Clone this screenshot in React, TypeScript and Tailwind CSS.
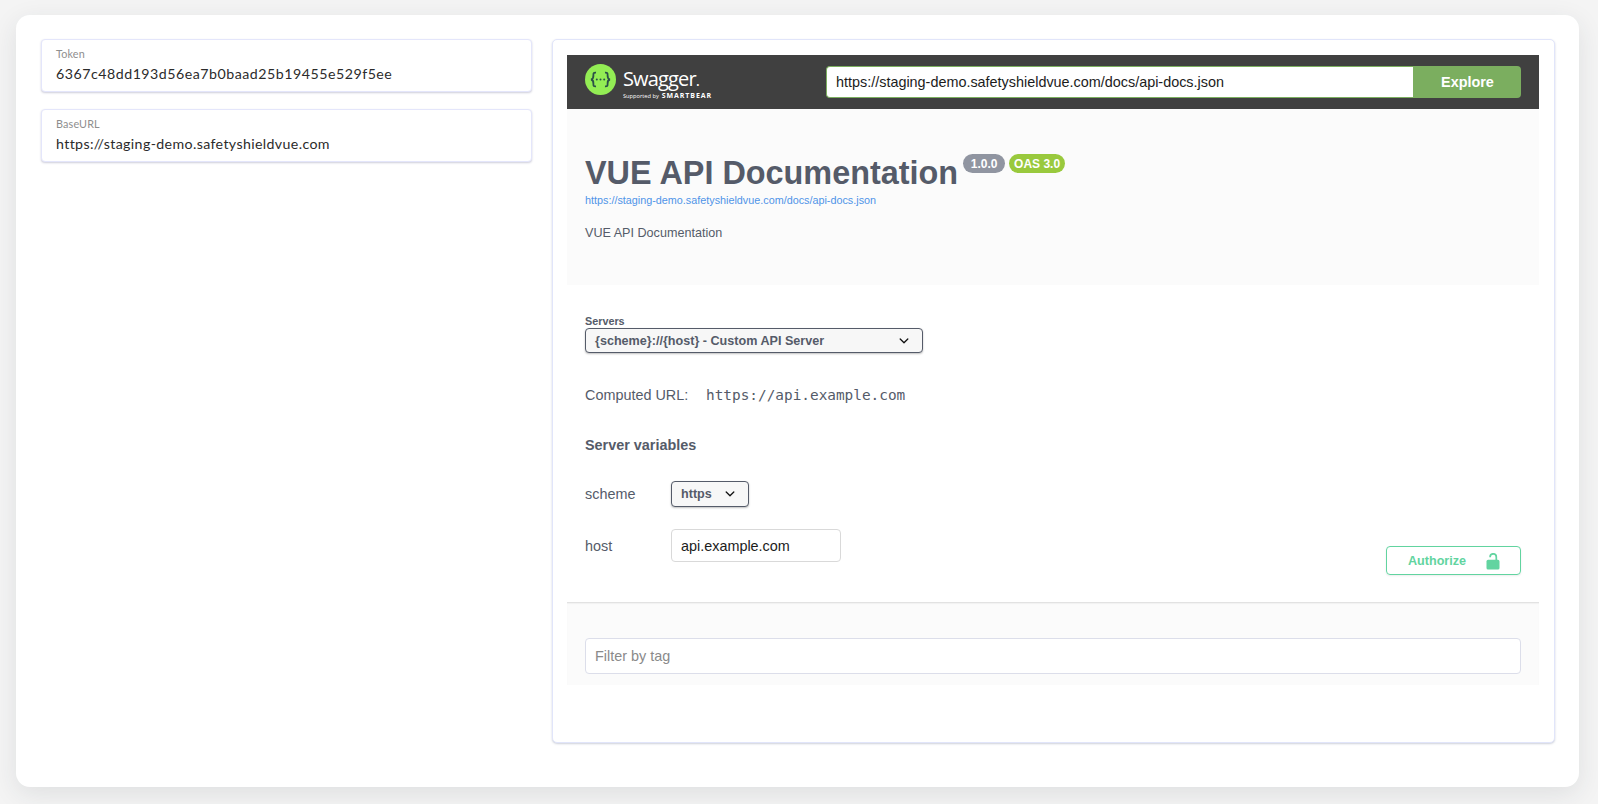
import React from "react";

function Field({ label, value, spacing }: { label: string; value: string; spacing: string }) {
  return (
    <div className="h-[53px] rounded-[4px] border border-[#e4e6fb] bg-white pl-[14px] pt-[6px] shadow-[0_1px_2px_rgba(60,60,110,0.25)] font-['Lato',sans-serif]">
      <div className="h-[15px] text-[10.8px] leading-[15px] tracking-[0.15px] text-[#8e8e8e]">{label}</div>
      <div className={"mt-[3px] h-[20px] whitespace-nowrap text-[14.2px] leading-[20px] text-[#2b2b2b] " + spacing}>{value}</div>
    </div>
  );
}

function Chevron() {
  return (
    <svg width="10" height="6" viewBox="0 0 10 6" fill="none" stroke="#111" strokeWidth="1.3" strokeLinecap="round" strokeLinejoin="round">
      <path d="M1.2 1 5 4.7 8.8 1" />
    </svg>
  );
}

function SwaggerMark() {
  return (
    <svg className="shrink-0" width="31" height="31" viewBox="0 0 31 31">
      <circle cx="15.5" cy="15.5" r="15.5" fill="#93ed54" />
      <g fill="none" stroke="#2b5048" strokeWidth="1.8">
        <path d="M11 8.6C8.6 8.4 8.3 9.2 8.4 11.2C8.5 13.6 8.6 15.1 6 15.5C8.6 15.9 8.5 17.4 8.4 19.8C8.3 21.8 8.6 22.6 11 22.4" />
        <path d="M20 8.6C22.4 8.4 22.7 9.2 22.6 11.2C22.5 13.6 22.4 15.1 25 15.5C22.4 15.9 22.5 17.4 22.6 19.8C22.7 21.8 22.4 22.6 20 22.4" />
      </g>
      <g fill="#2b5048">
        <circle cx="11.8" cy="15.5" r="1" />
        <circle cx="15.5" cy="15.5" r="1" />
        <circle cx="19.2" cy="15.5" r="1" />
      </g>
    </svg>
  );
}

export default function App() {
  return (
    <div className="h-[804px] w-[1598px] overflow-hidden bg-[#f4f4f4] pl-[16px] pt-[15px] font-['Liberation_Sans',Arial,sans-serif] text-[#555b69]">
      <div className="flex h-[772px] w-[1563px] items-start gap-[20px] rounded-[14px] bg-white pl-[25px] pt-[24px] shadow-[0_7px_26px_rgba(40,50,60,0.1)]">
        <div className="flex w-[491px] flex-col gap-[17px]">
          <Field label="Token" value="6367c48dd193d56ea7b0baad25b19455e529f5ee" spacing="tracking-[0.51px]" />
          <Field label="BaseURL" value="https://staging-demo.safetyshieldvue.com" spacing="tracking-[0.37px]" />
        </div>
        <div className="h-[704px] w-[1003px] rounded-[5px] border border-[#e1e5fa] bg-white pl-[14px] pt-[15px] shadow-[0_1px_2px_rgba(60,70,110,0.25)]">
          <div className="w-[972px]">
            <header className="flex h-[54px] items-center bg-[#404040] pl-[18px]">
              <div className="flex w-[241px] items-start gap-[7px] pb-[5px]">
                <SwaggerMark />
                <div className="h-[31px] whitespace-nowrap text-white">
                  <div className="h-[26px] pt-[2px] font-['Open_Sans',sans-serif] text-[20px] font-normal leading-[26px] tracking-[-0.85px]">Swagger<span className="text-[16px]">.</span></div>
                  <div className="flex gap-[3px] pt-[2px] font-['Open_Sans',sans-serif] leading-[8px]">
                    <span className="text-[5.7px]">Supported by</span>
                    <span className="text-[7px] font-bold tracking-[0.9px]">SMARTBEAR</span>
                  </div>
                </div>
              </div>
              <div className="flex h-[32px] w-[587px] items-center rounded-l-[4px] border border-r-0 border-[#7bae5f] bg-white pl-[9px] pt-[2px] text-[14.4px] text-[#1c1c1c]">https://staging-demo.safetyshieldvue.com/docs/api-docs.json</div>
              <button className="h-[32px] w-[108px] rounded-r-[4px] bg-[#7bae5f] pl-[1px] pt-[2px] text-[14.4px] font-bold text-white">Explore</button>
            </header>

            <section className="h-[176px] bg-[#fbfbfb] pl-[18px] pt-[45px]">
              <div className="flex items-start">
                <h1 className="h-[38px] whitespace-nowrap text-[32.4px] font-bold leading-[38px]">VUE API Documentation</h1>
                <span className="ml-[5px] flex h-[19px] w-[42px] items-center justify-center rounded-full bg-[#9095a1] text-[12px] font-bold text-white">1.0.0</span>
                <span className="ml-[4px] flex h-[19px] w-[56px] items-center justify-center rounded-full bg-[#99c93d] text-[12px] font-bold text-white">OAS 3.0</span>
              </div>
              <div className="mt-[2px] text-[10.8px] leading-[12px] text-[#4f94e8]">https://staging-demo.safetyshieldvue.com/docs/api-docs.json</div>
              <p className="mt-[19px] text-[12.6px] leading-[16px]">VUE API Documentation</p>
            </section>

            <section className="flex h-[317px] justify-between pl-[18px] pr-[18px]">
              <div>
                <div className="mt-[30px] text-[10.8px] font-bold leading-[13px]">Servers</div>
                <div className="flex h-[25px] w-[338px] items-center justify-between rounded-[4px] border border-[#555b69] bg-[#f7f7f7] pl-[9px] pr-[13px] pt-[1px] text-[12.6px] font-bold shadow-[0_1px_2px_rgba(0,0,0,0.25)]">
                  <span>{"{scheme}://{host} - Custom API Server"}</span>
                  <Chevron />
                </div>
                <div className="mt-[34px] flex h-[18px] items-center text-[14.4px]">
                  <span className="w-[121px]">Computed URL:</span>
                  <code className="font-['DejaVu_Sans_Mono',monospace] text-[14.4px]">https://api.example.com</code>
                </div>
                <h4 className="mt-[31px] text-[14.4px] font-bold leading-[18px]">Server variables</h4>
                <div className="mt-[27px] flex h-[26px] items-center">
                  <span className="w-[86px] pt-[2px] text-[14.4px]">scheme</span>
                  <div className="flex h-[26px] w-[78px] items-center justify-between rounded-[4px] border border-[#555b69] bg-[#f7f7f7] pl-[9px] pr-[13px] text-[12.6px] font-bold shadow-[0_1px_2px_rgba(0,0,0,0.25)]">
                    <span>https</span>
                    <Chevron />
                  </div>
                </div>
                <div className="mt-[22px] flex h-[33px] items-center">
                  <span className="w-[86px] pt-[2px] text-[14.4px]">host</span>
                  <div className="flex h-[33px] w-[170px] items-center rounded-[4px] border border-[#d9d9d9] bg-white pl-[9px] pt-[2px] text-[14.4px] text-[#1c1c1c]">api.example.com</div>
                </div>
              </div>
              <button className="mt-[261px] flex h-[29px] w-[135px] items-center rounded-[4px] border border-[#62d4a0] pl-[21px] pt-[1px] text-[12.6px] font-bold text-[#62d4a0] shadow-[0_1px_2px_rgba(0,0,0,0.08)]">
                <span className="w-[78px] text-left">Authorize</span>
                <svg width="14" height="17" viewBox="0 0 14 17">
                  <rect x="0.5" y="6.8" width="13" height="9.8" rx="1.6" fill="#62d4a0" />
                  <path d="M4.1 4.2V3.9A3.1 3.1 0 0 1 10.3 3.9V7.5" fill="none" stroke="#62d4a0" strokeWidth="1.7" />
                </svg>
              </button>
            </section>

            <section className="h-[83px] border-t border-[#e2e2e2] bg-[#fbfbfb] px-[18px] pt-[35px] shadow-[inset_0_1px_1px_rgba(0,0,0,0.04)]">
              <div className="flex h-[36px] items-center rounded-[4px] border border-[#dcdeea] bg-white pl-[9px] pt-[2px] text-[14.4px] text-[#8a8a8a]">Filter by tag</div>
            </section>
          </div>
        </div>
      </div>
    </div>
  );
}
